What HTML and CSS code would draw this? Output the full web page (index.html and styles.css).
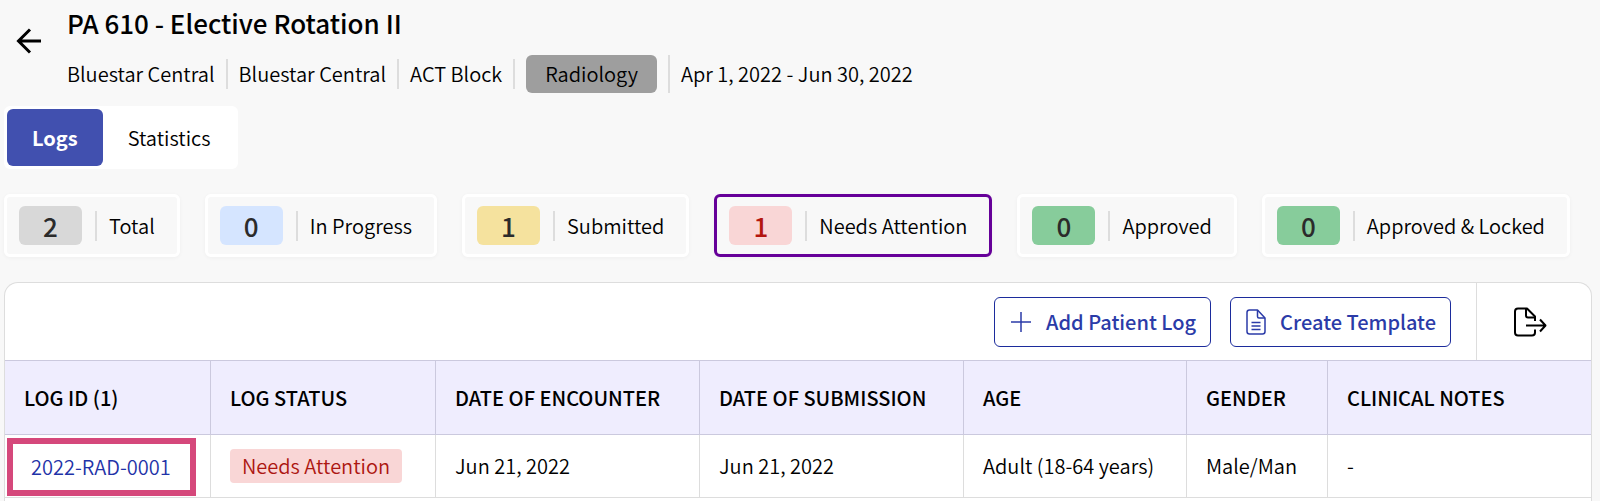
FILE: index.html
```
<!DOCTYPE html>
<html lang="en">
<head>
  <meta charset="UTF-8">
  <title>PA 610 - Elective Rotation II</title>
  <link rel="stylesheet" href="styles.css">
</head>
<body>

  <header class="page-header">
    <button class="back" type="button" aria-label="Back">
      <svg width="26" height="26" viewBox="0 0 26 26" fill="none" stroke="currentColor" stroke-width="3">
        <path d="M25 13H2M14 1.500L2.500 13L14 24.500"/>
      </svg>
    </button>
    <div class="heading">
      <h1>PA 610 - Elective Rotation II</h1>
      <ul class="meta">
        <li>Bluestar Central</li>
        <li>Bluestar Central</li>
        <li>ACT Block</li>
        <li class="tall"><span class="specialty">Radiology</span></li>
        <li>Apr 1, 2022 - Jun 30, 2022</li>
      </ul>
    </div>
  </header>

  <nav class="tabs">
    <button class="tab active" type="button">Logs</button>
    <button class="tab" type="button">Statistics</button>
  </nav>

  <div class="filters">
    <button class="filter" type="button"><span class="count gray">2</span><span class="label">Total</span></button>
    <button class="filter" type="button"><span class="count blue">0</span><span class="label">In Progress</span></button>
    <button class="filter" type="button"><span class="count yellow">1</span><span class="label">Submitted</span></button>
    <button class="filter selected" type="button"><span class="count red">1</span><span class="label">Needs Attention</span></button>
    <button class="filter" type="button"><span class="count green">0</span><span class="label">Approved</span></button>
    <button class="filter" type="button"><span class="count green">0</span><span class="label">Approved &amp; Locked</span></button>
  </div>

  <main class="panel">
    <div class="toolbar">
      <div class="actions">
        <button class="action" type="button">
          <svg width="22" height="22" viewBox="0 0 22 22" fill="none" stroke="currentColor" stroke-width="1.500">
            <path d="M11 1V21M1 11H21"/>
          </svg>
          Add Patient Log
        </button>
        <button class="action" type="button">
          <svg width="20" height="26" viewBox="0 0 20 26" fill="none" stroke="currentColor" stroke-width="1.500" stroke-linejoin="round">
            <path d="M3.500 1H11.500L19 9V22.500Q19 25 16.500 25H3.500Q1 25 1 22.500V3.500Q1 1 3.500 1Z"/>
            <path d="M11.500 1V7.500Q11.500 9 13 9H19M5.500 13.500H14.500M5.500 17H14.500M5.500 20.500H14.500"/>
          </svg>
          Create Template
        </button>
      </div>
      <button class="export" type="button" aria-label="Export">
        <svg width="34" height="30" viewBox="0 0 34 30" fill="none" stroke="currentColor" stroke-width="2" stroke-linejoin="round">
          <path d="M22 14V9.500L14 1.500H5Q2 1.500 2 4.500V25.500Q2 28.500 5 28.500H19Q22 28.500 22 25.500V22.500"/>
          <path d="M13 1.500V8.500Q13 10.500 15 10.500H22M13 18.500H32M27 12.500L32.500 18.500L27 24.500"/>
        </svg>
      </button>
    </div>

    <table class="logs">
      <colgroup>
        <col class="col-id">
        <col class="col-status">
        <col class="col-date">
        <col class="col-date">
        <col class="col-age">
        <col class="col-gender">
        <col>
      </colgroup>
      <thead>
        <tr>
          <th>LOG ID (1)</th>
          <th>LOG STATUS</th>
          <th>DATE OF ENCOUNTER</th>
          <th>DATE OF SUBMISSION</th>
          <th>AGE</th>
          <th>GENDER</th>
          <th>CLINICAL NOTES</th>
        </tr>
      </thead>
      <tbody>
        <tr>
          <td class="id-cell"><a class="log-link" href="#">2022-RAD-0001</a></td>
          <td><span class="status">Needs Attention</span></td>
          <td>Jun 21, 2022</td>
          <td>Jun 21, 2022</td>
          <td>Adult (18-64 years)</td>
          <td>Male/Man</td>
          <td>-</td>
        </tr>
      </tbody>
    </table>
  </main>

</body>
</html>
```

FILE: styles.css
```
* {
  box-sizing: border-box;
}
html, body {
  height: 100%;
}
body {
  margin: 0;
  padding: 0 8px 0 4px;
  display: flex;
  flex-direction: column;
  background-color: #f8f8f8;
  color: #000;
  font-family: "Noto Sans CJK SC", "Noto Sans", sans-serif;
  font-size: 20px;
  line-height: 24px;
  font-weight: 350;
  overflow: hidden;
}
button {
  font: inherit;
  color: inherit;
  background: none;
  border: none;
  padding: 0;
  cursor: pointer;
}
svg {
  display: block;
  flex: none;
}

/* header */
.page-header {
  display: flex;
  align-items: flex-start;
  gap: 25px;
  padding: 7px 0 13px 12px;
}
.back {
  padding-top: 21px;
}
h1 {
  margin: 0;
  font-size: 26px;
  line-height: 32px;
  font-weight: 500;
}
.meta {
  display: flex;
  align-items: center;
  margin: 16px 0 0;
  padding: 0;
  list-style: none;
}
.meta li {
  padding: 3px 11px;
  border-right: 2px solid #ddd;
}
.meta li:first-child {
  padding-left: 0;
}
.meta li:last-child {
  border-right: none;
}
.meta .tall {
  padding: 0 11px;
}
.specialty {
  display: block;
  padding: 7px 19px;
  border-radius: 6px;
  background-color: #9e9e9e;
}

/* tabs */
.tabs {
  display: flex;
  align-self: flex-start;
  padding: 3px;
  border-radius: 6px;
  background-color: #fff;
}
.tab {
  height: 57px;
  padding: 0 25px;
  border-radius: 6px;
}
.tab.active {
  background-color: #4150af;
  color: #fff;
  font-weight: 700;
}

/* status filters */
.filters {
  display: flex;
  gap: 25px;
  margin: 25px 0;
}
.filter {
  display: flex;
  align-items: center;
  gap: 13px;
  padding: 9px 22px 9px 12px;
  border: 3px solid #fff;
  border-radius: 6px;
  box-shadow: 0 1px 4px rgba(0, 0, 0, 0.04);
  white-space: nowrap;
}
.filter.selected {
  border-color: #660099;
}
.count {
  width: 63px;
  border-radius: 6px;
  font-size: 26px;
  line-height: 39px;
  font-weight: 500;
  color: #2b2b2b;
}
.label {
  padding: 3px 0 3px 12px;
  border-left: 2px solid #ddd;
}
.gray { background-color: #d8d8d8; }
.blue { background-color: #d5e5ff; }
.yellow { background-color: #f5e29e; }
.red { background-color: #f9d6d6; color: #b3160f; }
.green { background-color: #87cc9b; }

/* logs table */
.panel {
  flex: 1;
  border: 1px solid #ddd;
  border-bottom: none;
  border-radius: 14px 14px 0 0;
  background-color: #fff;
}
.toolbar {
  display: flex;
  justify-content: flex-end;
  height: 77px;
}
.actions {
  display: flex;
  align-items: center;
  gap: 19px;
  padding-right: 25px;
}
.action {
  display: flex;
  align-items: center;
  gap: 14px;
  height: 50px;
  padding: 0 14px 0 15px;
  border: 1px solid #1c2c9c;
  border-radius: 6px;
  color: #2b3ba8;
  font-weight: 500;
}
.export {
  display: flex;
  align-items: center;
  justify-content: center;
  width: 115px;
  padding-right: 8px;
  border-left: 1px solid #ddd;
}
.logs {
  width: 100%;
  table-layout: fixed;
  border-collapse: separate;
  border-spacing: 0;
}
.col-id { width: 206px; }
.col-status { width: 225px; }
.col-date { width: 264px; }
.col-age { width: 223px; }
.col-gender { width: 141px; }
th, td {
  padding: 0 19px;
  text-align: left;
  white-space: nowrap;
  border-right: 1px solid #ddd;
  border-bottom: 1px solid #ddd;
}
th:last-child, td:last-child {
  border-right: none;
}
th {
  height: 75px;
  background-color: #efedfe;
  font-weight: 500;
  border-color: #cbc9de;
  border-top: 1px solid #cbc9de;
}
td {
  height: 63px;
}
.id-cell {
  padding: 2px 2px 0;
}
.log-link {
  display: inline-block;
  padding: 11px 19px 11px 18px;
  border: 6px solid #d5487b;
  color: #1f33a8;
  text-decoration: none;
}
.status {
  display: inline-block;
  padding: 5px 12px;
  border-radius: 4px;
  background-color: #f9d6d6;
  color: #ad1711;
}
```
